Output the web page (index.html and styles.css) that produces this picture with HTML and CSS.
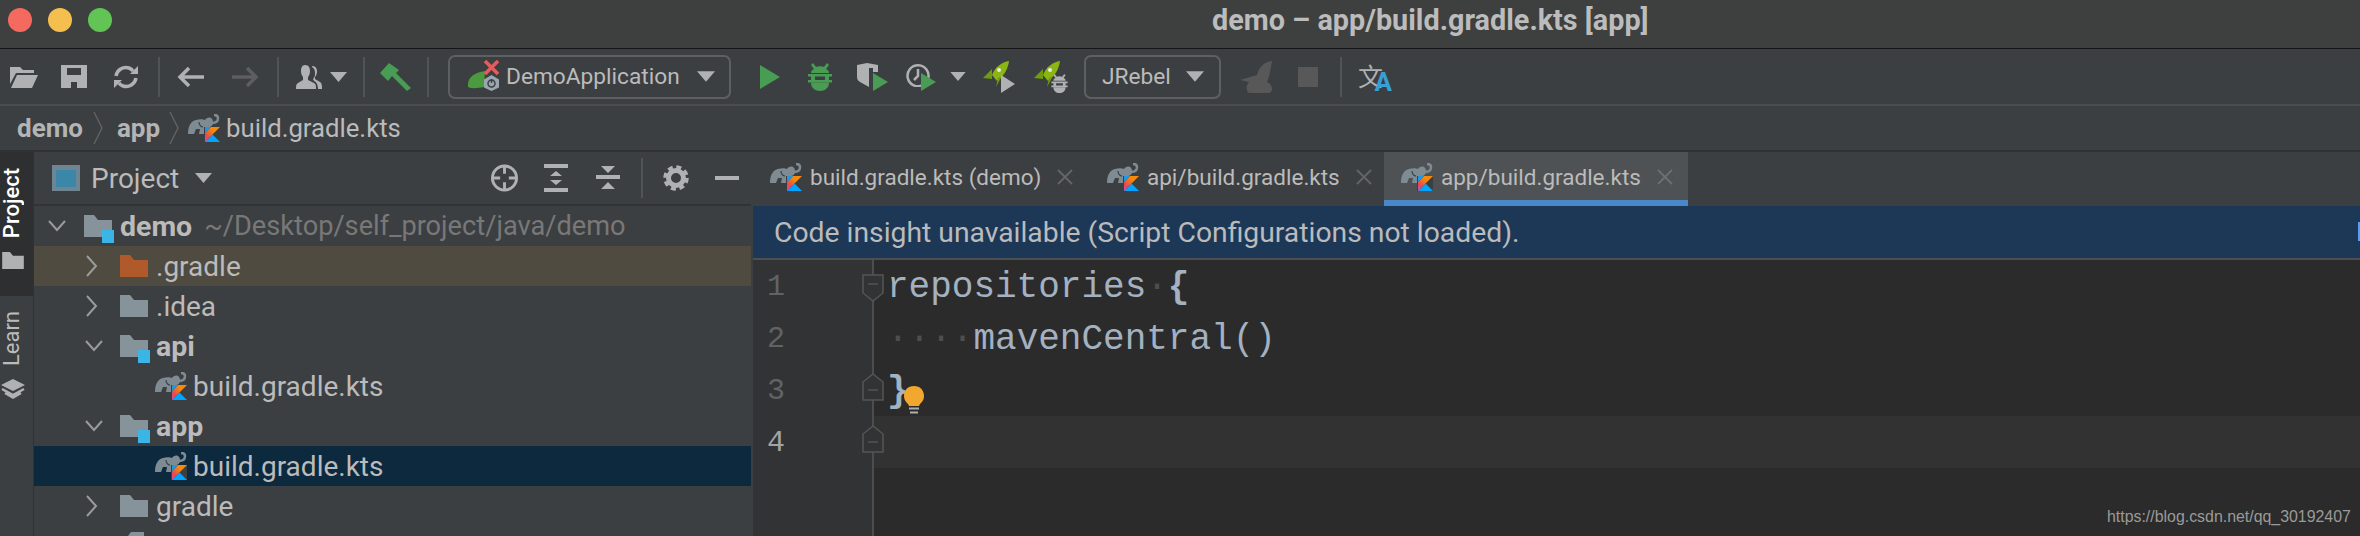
FILE: index.html
```html
<!DOCTYPE html>
<html lang="en">
<head>
<meta charset="utf-8">
<title>demo – app/build.gradle.kts [app]</title>
<link rel="stylesheet" href="styles.css">
</head>
<body>
<svg class="defs" width="0" height="0" aria-hidden="true">
  <defs>
    <linearGradient id="kstripe" x1="1" y1="0" x2="0" y2="1">
      <stop offset="0.35" stop-color="#f88909"/>
      <stop offset="0.75" stop-color="#e44857"/>
      <stop offset="1" stop-color="#c757bc"/>
    </linearGradient>
    <symbol id="gk" viewBox="0 0 32 28">
      <path fill="#7f8b93" d="M0 20C0 12 3 7 8 6c3-1 7-1 9 0 1-2 4-3 6-2 2 1 2 3 2 5 0 2-2 4-4 4h-4l-1 7h-5l1-5H8l-2 5H0z"/>
      <path fill="none" stroke="#7f8b93" stroke-width="2.500" d="M24 9c4 0 6-2 6-5 0-2-2-3-4-3"/>
      <path fill="none" stroke="#3c3f41" stroke-width="1.200" d="M11 8c0 3 2 5 4 5"/>
      <path fill="#3c3f41" d="M16 13h16v15H16z"/>
      <path fill="#00a5ff" d="M24.500 20.500 32 28H17z"/>
      <path fill="url(#kstripe)" d="M23 13h9L17 28v-9z"/>
      <path fill="#1d9ae0" d="M17 13h6l-6 6z"/>
    </symbol>
    <symbol id="folder" viewBox="0 0 28 22">
      <path d="M0 0h10l4 5h14v17H0z"/>
    </symbol>
    <symbol id="caret" viewBox="0 0 17 10">
      <path d="M0 0h17L8.500 10z"/>
    </symbol>
    <symbol id="chev-r" viewBox="0 0 12 22">
      <path fill="none" stroke="currentColor" stroke-width="2" d="M1 1l9 10-9 10"/>
    </symbol>
    <symbol id="chev-d" viewBox="0 0 18 12">
      <path fill="none" stroke="currentColor" stroke-width="2" d="M1 1l8 9 8-9"/>
    </symbol>
    <symbol id="crumb-chev" viewBox="0 0 10 32">
      <path fill="none" stroke="#5f6061" stroke-width="1.500" d="M1 0l8 16-8 16"/>
    </symbol>
    <symbol id="play-g" viewBox="0 0 15 18"><path fill="#499c54" d="M0 0l15 9-15 9z"/></symbol>
    <symbol id="rocket" viewBox="0 0 26 26">
      <path fill="#8ab512" d="M26 0c-7 1-14 6-17 14l5 6C21 15 25 8 26 0z"/>
      <path fill="#6e9b0f" d="M9 8 0 17l9 1z"/>
      <path fill="#6e9b0f" d="M15 17l-2 9 6-11z"/>
      <circle cx="16" cy="9" r="2" fill="#e8e8e8"/>
    </symbol>
    <symbol id="bug" viewBox="0 0 24 28">
      <path d="M5 0l3 4c2-1 6-1 8 0l3-4 2 2-3 4c2 1 3 2 3 4H3c0-2 1-3 3-4L3 2z"/>
      <path d="M0 11h24v2.500H0zM0 17h24v2.500H0zM3 13.500h4v3.500H3zM17 13.500h4v3.500h-4z"/>
      <path d="M3 19.500h18C21 25 17 28 12 28S3 25 3 19.500z"/>
    </symbol>
    <symbol id="fold-down" viewBox="0 0 22 28">
      <path fill="#313335" stroke="#555" stroke-width="1.500" d="M1 1h20v18l-10 8-10-8z"/>
      <path stroke="#555" stroke-width="1.500" d="M6 10h10"/>
    </symbol>
    <symbol id="fold-up" viewBox="0 0 22 28">
      <path fill="#313335" stroke="#555" stroke-width="1.500" d="M1 27h20V9L11 1 1 9z"/>
      <path stroke="#555" stroke-width="1.500" d="M6 17h10"/>
    </symbol>
  </defs>
</svg>

<header class="titlebar">
  <div class="lights">
    <span class="light light-red"></span>
    <span class="light light-yellow"></span>
    <span class="light light-green"></span>
  </div>
  <div class="title">demo – app/build.gradle.kts [app]</div>
</header>

<nav class="toolbar">
  <svg class="ti t-open" viewBox="0 0 28 22"><path d="M0 1h10l3 3h11v3H6L0 18zM7 9h21l-6 13H1z"/></svg>
  <svg class="ti t-save" viewBox="0 0 26 23"><path fill-rule="evenodd" d="M0 0h26v23H0zM6 3v7h14V3zM10 17v6h6v-6z"/></svg>
  <svg class="ti t-sync" viewBox="0 0 26 24"><path fill="none" stroke="#afb1b3" stroke-width="3.500" d="M3 11C4 5 10 1 16 3c2 .7 3 1.500 4 3M23 13c-1 6-7 10-13 8-2-.7-3-1.500-4-3"/><path d="M25 1v8h-8zM1 23v-8h8z"/></svg>
  <span class="sep s-1"></span>
  <svg class="ti t-back" viewBox="0 0 27 20"><path fill="none" stroke="#afb1b3" stroke-width="3.500" d="M27 10H4M12 1l-9 9 9 9"/></svg>
  <svg class="ti t-fwd" viewBox="0 0 27 20"><path fill="none" stroke="#5d5e5f" stroke-width="3.500" d="M0 10h23M15 1l9 9-9 9"/></svg>
  <span class="sep s-2"></span>
  <svg class="ti t-user" viewBox="0 0 26 24"><path d="M9 0c4 0 5 3 5 6 0 3-1 5-2 6v3l6 3c2 1 2 3 2 6H0c0-3 0-5 2-6l5-3v-3C6 11 5 9 5 6c0-3 1-6 4-6z"/><path d="M16 1c4 0 5 3 5 5 0 3-1 5-2 6v2l5 3c2 1 2 4 2 7h-4c0-3-1-7-4-8l-1-2c2-2 2-4 2-6 0-3-1-5-3-6z"/></svg>
  <svg class="ti t-caret1"><use href="#caret"/></svg>
  <span class="sep s-3"></span>
  <svg class="ti t-hammer" viewBox="0 0 31 28"><path fill="#499c54" d="M0 10 9 0l10 7-3 3 15 15-4 3L12 13l-4 5z"/></svg>
  <span class="sep s-4"></span>
  <div class="combo combo-run">
    <svg class="combo-icon" viewBox="0 0 32 31">
      <path fill="#4c9a3f" d="M0 27C-1 19 4 13 17 11l-1 16c-6 1-12 2-16 0z"/>
      <path fill="none" stroke="#de5f5f" stroke-width="3.500" d="M17 1l13 13M30 1 17 14"/>
      <path fill="#9aa7b0" d="M23.500 15 31 19.500v8L23.500 31 16 27.500v-8z"/>
      <circle cx="23.500" cy="23.500" r="3.500" fill="none" stroke="#3c3f41" stroke-width="1.500"/>
      <path stroke="#3c3f41" stroke-width="1.500" d="M23.500 19v4"/>
    </svg>
    <span class="combo-label">DemoApplication</span>
    <svg class="combo-caret"><use href="#caret"/></svg>
  </div>
  <svg class="ti t-run" viewBox="0 0 20 24"><path fill="#499c54" d="M0 0l20 12L0 24z"/></svg>
  <svg class="ti t-debug bug-green"><use href="#bug"/></svg>
  <span class="stack t-cover">
    <svg class="ti shield" viewBox="0 0 21 24"><path fill-rule="evenodd" d="M0 2l10-2 11 2v7h-5V5h-4v19L3 19c-2-1-3-3-3-5z"/></svg>
    <svg class="play-badge"><use href="#play-g"/></svg>
  </span>
  <span class="stack t-prof">
    <svg class="ti clock" viewBox="0 0 24 24"><path fill="none" stroke="#afb1b3" stroke-width="2.500" d="M17 22a10.500 10.500 0 1 1 5-6M12 6v7l-4 4"/></svg>
    <svg class="play-badge"><use href="#play-g"/></svg>
  </span>
  <svg class="ti t-caret2"><use href="#caret"/></svg>
  <span class="stack t-rocket1">
    <svg class="rocket"><use href="#rocket"/></svg>
    <svg class="rocket-play" viewBox="0 0 14 18"><path fill="#afb1b3" d="M0 0l14 9-14 9z"/></svg>
  </span>
  <span class="stack t-rocket2">
    <svg class="rocket"><use href="#rocket"/></svg>
    <svg class="rocket-bug"><use href="#bug"/></svg>
  </span>
  <div class="combo combo-jrebel">
    <span class="combo-label">JRebel</span>
    <svg class="combo-caret"><use href="#caret"/></svg>
  </div>
  <svg class="t-rabbit" viewBox="0 0 32 32"><path fill="#585858" d="M32 0c-8 1-13 6-15 14L0 19l9 2c-2 2-3 5-2 8 0 2 1 3 3 3h18c3 0 4-2 4-4 0-3-2-6-5-7 2-4 3-9 5-21z"/></svg>
  <span class="t-stop"></span>
  <span class="sep s-5"></span>
  <span class="translate"><span class="tr-wen">文</span><span class="tr-a">A</span></span>
</nav>

<div class="crumbs">
  <span class="crumb crumb-demo">demo</span>
  <svg class="crumb-sep"><use href="#crumb-chev"/></svg>
  <span class="crumb crumb-app">app</span>
  <svg class="crumb-sep crumb-sep2"><use href="#crumb-chev"/></svg>
  <svg class="gk crumb-gk"><use href="#gk"/></svg>
  <span class="crumb-file">build.gradle.kts</span>
</div>

<main class="main">
  <aside class="strip">
    <div class="strip-tab strip-active">
      <span class="strip-text">Project</span>
      <svg class="strip-folder"><use href="#folder"/></svg>
    </div>
    <div class="strip-tab strip-learn">
      <span class="strip-text">Learn</span>
      <svg class="strip-cap" viewBox="0 0 24 20"><path d="M12 0l12 6-12 6L0 6z"/><path fill="none" stroke="#afb1b3" stroke-width="2.500" d="M1 10l11 6 11-6M4 14l8 4.500 8-4.500"/></svg>
    </div>
  </aside>

  <section class="panel">
    <div class="panel-head">
      <svg class="p-proj" viewBox="0 0 28 26"><path fill="#6f8593" d="M0 0h28v26H0z"/><path fill="#3b87a8" d="M4 5h20v17H4z"/></svg>
      <span class="p-title">Project</span>
      <svg class="p-caret"><use href="#caret"/></svg>
      <svg class="p-i p-target" viewBox="0 0 29 29"><circle cx="14.500" cy="14.500" r="12.500" fill="none" stroke="#afb1b3" stroke-width="3"/><path stroke="#afb1b3" stroke-width="3" d="M14.500 2v8M14.500 19v8M2 14.500h8M19 14.500h8"/></svg>
      <svg class="p-i p-expand" viewBox="0 0 24 28"><path d="M0 0h24v4H0zM0 24h24v4H0zM12 7l6 5H6zM6 16h12l-6 5z"/></svg>
      <svg class="p-i p-collapse" viewBox="0 0 24 28"><path d="M5 2h14l-7 7zM0 11h24v4H0zM12 18l7 7H5z"/></svg>
      <span class="p-sep"></span>
      <svg class="p-i p-gear" viewBox="0 0 26 28"><circle cx="13" cy="14" r="7.500" fill="none" stroke="#afb1b3" stroke-width="5"/><circle cx="13" cy="14" r="11" fill="none" stroke="#afb1b3" stroke-width="3.500" stroke-dasharray="5 3.640"/></svg>
      <span class="p-min"></span>
    </div>

    <ul class="tree">
      <li class="row d0">
        <svg class="chev-down"><use href="#chev-d"/></svg>
        <span class="mod">
          <svg class="fold fold-gray"><use href="#folder"/></svg><span class="mod-badge"></span>
        </span>
        <span class="name bold">demo</span>
        <span class="path">~/Desktop/self_project/java/demo</span>
      </li>
      <li class="row d1 row-gradle">
        <svg class="chev-right"><use href="#chev-r"/></svg>
        <svg class="fold fold-orange"><use href="#folder"/></svg>
        <span class="name">.gradle</span>
      </li>
      <li class="row d1">
        <svg class="chev-right"><use href="#chev-r"/></svg>
        <svg class="fold fold-gray"><use href="#folder"/></svg>
        <span class="name">.idea</span>
      </li>
      <li class="row d1">
        <svg class="chev-down"><use href="#chev-d"/></svg>
        <span class="mod">
          <svg class="fold fold-gray"><use href="#folder"/></svg><span class="mod-badge"></span>
        </span>
        <span class="name bold">api</span>
      </li>
      <li class="row d2">
        <svg class="gk"><use href="#gk"/></svg>
        <span class="name file">build.gradle.kts</span>
      </li>
      <li class="row d1">
        <svg class="chev-down"><use href="#chev-d"/></svg>
        <span class="mod">
          <svg class="fold fold-gray"><use href="#folder"/></svg><span class="mod-badge"></span>
        </span>
        <span class="name bold">app</span>
      </li>
      <li class="row d2 row-selected">
        <svg class="gk"><use href="#gk"/></svg>
        <span class="name file">build.gradle.kts</span>
      </li>
      <li class="row d1">
        <svg class="chev-right"><use href="#chev-r"/></svg>
        <svg class="fold fold-gray"><use href="#folder"/></svg>
        <span class="name">gradle</span>
      </li>
      <li class="row row-last d1">
        <svg class="file-top" viewBox="0 0 16 4"><path fill="#87939a" d="M3 0h13v4H0z"/></svg>
      </li>
    </ul>
  </section>

  <section class="editor">
    <div class="tabs">
      <div class="tab tab-1">
        <svg class="gk"><use href="#gk"/></svg>
        <span class="tab-label">build.gradle.kts (demo)</span>
        <svg class="tab-x" viewBox="0 0 16 16"><path stroke="#636567" stroke-width="1.800" d="M1 1l14 14M15 1 1 15"/></svg>
      </div>
      <div class="tab tab-2">
        <svg class="gk"><use href="#gk"/></svg>
        <span class="tab-label">api/build.gradle.kts</span>
        <svg class="tab-x" viewBox="0 0 16 16"><path stroke="#636567" stroke-width="1.800" d="M1 1l14 14M15 1 1 15"/></svg>
      </div>
      <div class="tab tab-3 tab-active">
        <svg class="gk"><use href="#gk"/></svg>
        <span class="tab-label">app/build.gradle.kts</span>
        <svg class="tab-x" viewBox="0 0 16 16"><path stroke="#6d6f71" stroke-width="1.800" d="M1 1l14 14M15 1 1 15"/></svg>
      </div>
    </div>

    <div class="banner">
      <span>Code insight unavailable (Script Configurations not loaded).</span>
      <span class="banner-mark"></span>
    </div>

    <div class="code-area">
      <div class="gutter">
        <div class="gline"><span class="ln">1</span><svg class="fm fm-1"><use href="#fold-down"/></svg></div>
        <div class="gline"><span class="ln">2</span></div>
        <div class="gline"><span class="ln">3</span><svg class="fm fm-3"><use href="#fold-up"/></svg></div>
        <div class="gline"><span class="ln ln-cur">4</span><svg class="fm fm-4"><use href="#fold-up"/></svg></div>
      </div>
      <div class="code">
        <div class="cline">repositories<span class="ws">·</span><b class="brace">{</b></div>
        <div class="cline"><span class="ws">····</span>mavenCentral()</div>
        <div class="cline"><b class="brace">}</b><svg class="bulb" viewBox="0 0 20 28"><path fill="#f2a82e" d="M10 0c6 0 10 4 10 10 0 4-2 6-4 8l-1 2H5l-1-2c-2-2-4-4-4-8C0 4 4 0 10 0z"/><path fill="#aeaeae" d="M5 21.500h10v2H5zM6 25.500h8v2H6z"/></svg></div>
        <div class="cline cline-cur"></div>
      </div>
    </div>
  </section>
</main>

<div class="watermark">https://blog.csdn.net/qq_30192407</div>
</body>
</html>
```
FILE: styles.css
```css
* { box-sizing: border-box; }
html, body { margin: 0; padding: 0; }
body {
  width: 2360px;
  height: 536px;
  overflow: hidden;
  position: relative;
  background: #3c3f41;
  color: #bbbbbb;
  font-family: Roboto, "Noto Sans", sans-serif;
  font-size: 28px;
  display: flex;
  flex-direction: column;
}
svg { display: block; flex: none; }
.defs { position: absolute; }

/* title bar */
.titlebar {
  height: 49px;
  background: #3e4040;
  border-bottom: 1.500px solid #151515;
  display: flex;
  align-items: center;
  position: relative;
  flex: none;
}
.lights { display: flex; gap: 16px; padding-left: 8px; margin-top: -9px; }
.light { width: 24px; height: 24px; border-radius: 50%; }
.light-red { background: #f46a5f; }
.light-yellow { background: #f5bf4f; }
.light-green { background: #61c454; }
.title {
  position: absolute;
  left: 1212px;
  top: 4px;
  font-weight: 700;
  font-size: 28.800px;
  line-height: 32px;
  color: #bcbcbc;
  white-space: nowrap;
}

/* toolbar */
.toolbar {
  height: 57px;
  flex: none;
  display: flex;
  align-items: center;
  background: #3c3f41;
  border-bottom: 2px solid #4b4c4d;
  fill: #afb1b3;
}
.ti { fill: #afb1b3; }
.sep { width: 2px; height: 40px; background: #515354; flex: none; }
.t-open { width: 28px; height: 22px; margin-left: 10px; }
.t-save { width: 26px; height: 23px; margin-left: 23px; }
.t-sync { width: 26px; height: 24px; margin-left: 26px; }
.s-1 { margin-left: 19px; }
.t-back { width: 27px; height: 20px; margin-left: 17px; }
.t-fwd { width: 27px; height: 20px; margin-left: 28px; }
.s-2 { margin-left: 18px; }
.t-user { width: 26px; height: 24px; margin-left: 17px; }
.t-caret1 { width: 17px; height: 10px; margin-left: 8px; }
.s-3 { margin-left: 16px; }
.t-hammer { width: 31px; height: 28px; margin-left: 15px; }
.s-4 { margin-left: 16px; }
.combo {
  height: 44px;
  border: 2px solid #5e6060;
  border-radius: 7px;
  display: flex;
  align-items: center;
  flex: none;
}
.combo-run { width: 283px; margin-left: 19px; padding-left: 18px; }
.combo-icon { width: 32px; height: 31px; margin-top: -3px; }
.combo-label { font-size: 22.700px; color: #bbbbbb; white-space: nowrap; }
.combo-run .combo-label { margin-left: 6px; }
.combo-caret { width: 18px; height: 11px; fill: #afb1b3; }
.combo-run .combo-caret { margin-left: 17px; }
.t-run { width: 20px; height: 24px; margin-left: 29px; }
.t-debug { width: 24px; height: 28px; margin-left: 28px; }
.bug-green { fill: #499c54; }
.stack { position: relative; display: block; flex: none; }
.t-cover { width: 31px; height: 28px; margin-left: 25px; }
.shield { width: 21px; height: 24px; }
.play-badge { position: absolute; right: 0; bottom: 0; width: 15px; height: 18px; }
.t-prof { width: 30px; height: 28px; margin-left: 18px; }
.clock { width: 24px; height: 24px; }
.t-caret2 { width: 16px; height: 9px; margin-left: 14px; }
.t-rocket1 { width: 32px; height: 32px; margin-left: 17px; }
.t-rocket2 { width: 34px; height: 32px; margin-left: 19px; }
.rocket { width: 26px; height: 26px; }
.rocket-play { position: absolute; right: 0; bottom: 0; width: 14px; height: 18px; }
.rocket-bug { position: absolute; right: 0; bottom: 0; width: 17px; height: 19px; fill: #afb1b3; }
.combo-jrebel { width: 137px; margin-left: 16px; padding-left: 16px; }
.combo-jrebel .combo-caret { margin-left: 15px; }
.t-rabbit { width: 32px; height: 32px; margin-left: 19px; }
.t-stop { width: 20px; height: 20px; background: #585858; margin-left: 26px; flex: none; }
.s-5 { margin-left: 22px; }
.translate { position: relative; display: block; width: 34px; height: 30px; margin-left: 16px; flex: none; }
.tr-wen {
  font-family: "Noto Sans CJK SC", sans-serif;
  font-size: 25px;
  line-height: 26px;
  color: #afb1b3;
  display: block;
}
.tr-a {
  position: absolute;
  right: 0;
  bottom: -2px;
  font-size: 26px;
  line-height: 24px;
  font-weight: 700;
  color: #389fd6;
}

/* breadcrumbs */
.crumbs {
  height: 46px;
  flex: none;
  display: flex;
  align-items: center;
  border-bottom: 2px solid #303132;
  background: #3c3f41;
}
.crumb { font-weight: 700; font-size: 26px; color: #b4b4b4; }
.crumb-demo { margin-left: 17px; }
.crumb-sep { width: 10px; height: 32px; margin-left: 10px; }
.crumb-app { margin-left: 14px; }
.crumb-sep2 { margin-left: 9px; }
.crumb-gk { margin-left: 9px; }
.crumb-file { margin-left: 6px; white-space: nowrap; font-size: 25.700px; }
.gk { width: 32px; height: 28px; }

/* main */
.main { flex: 1; min-height: 0; display: flex; overflow: hidden; }
.strip { width: 34px; flex: none; background: #3c3f41; border-right: 1px solid #303132; }
.strip-tab { display: flex; flex-direction: column; align-items: flex-start; }
.strip-active { height: 144px; background: #2d2f30; padding-top: 16px; }
.strip-learn { padding-top: 15px; }
.strip-text {
  writing-mode: vertical-rl;
  transform: rotate(180deg);
  font-size: 22px;
  line-height: 24px;
  white-space: nowrap;
}
.strip-active .strip-text { color: #ffffff; font-weight: 500; }
.strip-folder { width: 22px; height: 17px; fill: #afb1b3; margin: 14px 0 0 2px; }
.strip-learn .strip-text { color: #bbbbbb; }
.strip-cap { width: 24px; height: 20px; fill: #afb1b3; margin: 13px 0 0 1px; }

.panel { width: 717px; flex: none; background: #3c3f41; display: flex; flex-direction: column; min-height: 0; overflow: hidden; }
.panel-head {
  height: 54px;
  flex: none;
  display: flex;
  align-items: center;
  border-bottom: 2px solid #323334;
  fill: #afb1b3;
}
.p-proj { width: 28px; height: 26px; margin-left: 18px; }
.p-title { margin-left: 11px; width: 86px; white-space: nowrap; }
.p-caret { width: 17px; height: 10px; margin-left: 18px; fill: #afb1b3; }
.p-i { height: 28px; }
.p-target { width: 29px; margin-left: 278px; }
.p-expand { width: 24px; margin-left: 25px; }
.p-collapse { width: 24px; margin-left: 28px; }
.p-sep { width: 2px; height: 40px; background: #515354; margin-left: 21px; flex: none; }
.p-gear { width: 26px; margin-left: 20px; }
.p-min { width: 24px; height: 4px; background: #afb1b3; margin-left: 26px; flex: none; }

.tree { list-style: none; margin: 0; padding: 0; }
.row { height: 40px; display: flex; align-items: center; white-space: nowrap; position: relative; }
.d0 { padding-left: 14px; }
.d1 { padding-left: 51px; }
.d2 { padding-left: 121px; }
.row-gradle { background: #4f4b41; }
.row-selected { background: #0d293e; }
.chev-down { width: 18px; height: 12px; color: #9a9b9c; }
.chev-right { width: 12px; height: 22px; color: #9a9b9c; margin-left: 1px; margin-right: 4px; }
.mod { display: block; position: relative; width: 28px; height: 22px; margin-left: 17px; flex: none; }
.d0 .mod { margin-left: 18px; }
.chev-right + .fold { margin-left: 18px; }
.fold { width: 28px; height: 22px; }
.fold-gray { fill: #87939a; }
.fold-orange { fill: #b05a2c; }
.mod-badge { position: absolute; right: -2px; bottom: -6px; width: 12px; height: 13px; background: #3bb4e6; }
.name { margin-left: 8px; }
.bold { font-weight: 700; font-size: 28.500px; }
.path { margin-left: 12px; color: #787878; font-size: 27.200px; }
.name.file { margin-left: 6px; }
.row-last { height: 10px; align-items: flex-start; padding-top: 6px; overflow: hidden; }
.file-top { width: 16px; height: 4px; margin-left: 43px; }

/* editor */
.editor { flex: 1; min-width: 0; margin-left: 2px; display: flex; flex-direction: column; background: #2b2b2b; }
.tabs { height: 54px; flex: none; display: flex; background: #3c3f41; }
.tab { height: 54px; display: flex; align-items: center; padding-bottom: 4px; flex: none; }
.tab-1 { width: 338px; padding-left: 17px; }
.tab-2 { width: 293px; padding-left: 16px; }
.tab-3 { width: 304px; padding-left: 17px; }
.tab-active { background: #4e5254; border-bottom: 6px solid #4a88c7; padding-top: 2px; padding-bottom: 0; }
.tab-label { margin-left: 8px; white-space: nowrap; font-size: 22.500px; }
.tab-x { width: 16px; height: 16px; margin-left: 16px; }
.banner {
  height: 54px;
  flex: none;
  background: #1d3857;
  border-bottom: 2px solid #4d5052;
  display: flex;
  align-items: center;
  justify-content: space-between;
  padding-left: 21px;
  font-size: 28.300px;
}
.banner-mark { width: 2px; height: 19px; background: #589df6; margin-top: -2px; }
.code-area { flex: 1; min-height: 0; display: flex; }
.gutter { width: 121px; flex: none; background: #313335; border-right: 2px solid #4d4d4d; position: relative; z-index: 1; }
.gline { height: 52px; display: flex; align-items: center; position: relative; }
.ln {
  font-family: "Liberation Mono", monospace;
  font-size: 30px;
  color: #606366;
  margin: 2px 0 0 14px;
}
.ln-cur { color: #a4a3a3; }
.fm { position: absolute; width: 22px; height: 28px; right: -12px; }
.fm-1 { top: 14px; }
.fm-3 { top: 9px; }
.fm-4 { top: 9px; }
.code { flex: 1; min-width: 0; font-family: "Liberation Mono", monospace; font-size: 36px; color: #a3b1c0; }
.cline { height: 52px; line-height: 55px; padding-left: 13px; white-space: pre; position: relative; }
.cline-cur { background: #323232; }
.ws { color: #4e4e4e; }
.brace { font-weight: 700; }
.bulb { position: absolute; left: 30px; top: 22px; width: 20px; height: 28px; }

.watermark {
  position: absolute;
  left: 2107px;
  top: 507px;
  font-family: "Liberation Sans", sans-serif;
  font-size: 15.900px;
  line-height: 20px;
  color: #9a9a9a;
  white-space: nowrap;
}
```
